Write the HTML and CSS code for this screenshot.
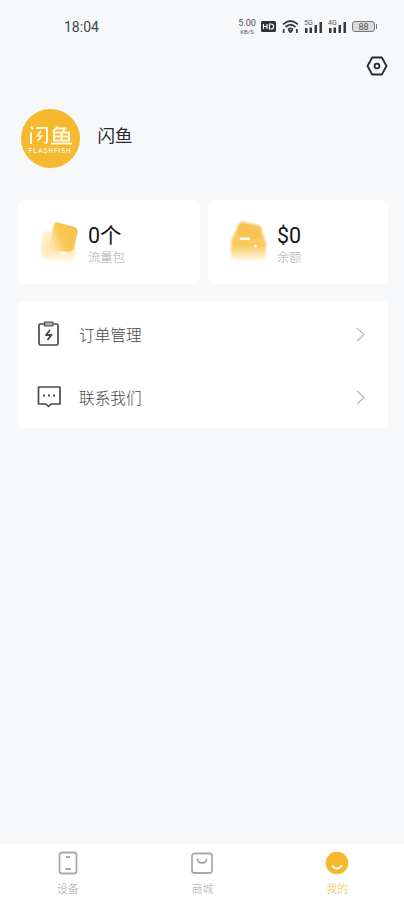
FILE: index.html
```html
<!DOCTYPE html>
<html lang="zh-CN">
<head>
<meta charset="utf-8">
<meta name="viewport" content="width=device-width, initial-scale=1">
<title>我的</title>
<link rel="stylesheet" href="styles.css">
</head>
<body>
<div class="app">
  <header class="status">
    <span class="time">18:04</span>
    <div class="indicators">
      <div class="speed"><span>5.00</span><small>KB/S</small></div>
      <svg class="hd" width="15" height="11" viewBox="0 0 15 11"><rect width="15" height="11" rx="1.500" fill="#303236"/><path d="M2.500 3v5M6 3v5M2.500 5.500H6M8.500 3H10c3.500 0 3.500 5 0 5H8.500z" fill="none" stroke="#f6f8fa" stroke-width="1.200"/></svg>
      <svg class="wifi" width="17" height="13" viewBox="0 0 17 13" fill="none" stroke="#38393d" stroke-width="1.700"><path d="M1 4.300Q8.500-2.300 16 4.300M3.500 7Q8.500 2.500 13.500 7M6 9.500Q8.500 7.400 11 9.500"/><path d="M7.300 10.800h2.400L8.500 12.300zM1.700 9v4M14.800 9v4"/></svg>
      <div class="signal"><span>5G</span><svg width="19" height="13" viewBox="0 0 19 13" fill="#38393d"><path d="M1 8h2.500v5H1zM5.500 7.500H8V13H5.500zM10.500 5H13v8h-2.500zM15.500 2H18v11h-2.500z"/></svg></div>
      <div class="signal"><span>4G</span><svg width="19" height="13" viewBox="0 0 19 13" fill="#38393d"><path d="M1 8h2.500v5H1zM5.500 7.500H8V13H5.500zM10.500 5H13v8h-2.500zM15.500 2H18v11h-2.500z"/></svg></div>
      <div class="battery">88</div>
    </div>
  </header>

  <div class="toolbar">
    <svg width="22" height="20" viewBox="0 0 22 20" fill="none" stroke="#28292d" stroke-width="1.800" stroke-linejoin="round"><path d="M6.200 1.500h9.600L20.500 10l-4.700 8.500H6.200L1.500 10z"/><circle cx="11" cy="10" r="2.400"/></svg>
  </div>

  <section class="profile">
    <div class="avatar">
      <div class="logo">
        <svg width="20" height="19" viewBox="0 0 20 19" fill="none" stroke="#fff8df" stroke-width="2.100"><path d="M2 .5l2 3M2 6v12M7 2h11v13.500q0 1.500-3 1.500"/><path d="M12 5l-4 5h4.500l-4 5" stroke-width="1.700"/></svg>
        <svg width="21" height="19" viewBox="0 0 21 19" fill="none" stroke="#fff8df" stroke-width="2.100"><path d="M7 .5L2 5.500M6 2.500h8l-2 3.500M3 6.500h15v8H3zM3 10.500h15M10.500 6v8M0 17.500h21"/></svg>
      </div>
      <span class="brand">FLASHFISH</span>
    </div>
    <h1>闪鱼</h1>
  </section>

  <main>
    <section class="stats">
      <div class="card">
        <svg width="40" height="46" viewBox="0 0 40 46">
          <defs>
            <linearGradient id="back" x1="0" y1="0" x2="0" y2="1"><stop stop-color="#fff1d0"/><stop offset=".65" stop-color="#ffe8b2"/><stop offset="1" stop-color="#fff8e8"/></linearGradient>
            <linearGradient id="front" x1="1" y1="0" x2="0" y2=".45"><stop stop-color="#f5c04c"/><stop offset=".65" stop-color="#f9c753"/><stop offset="1" stop-color="#ffe09a"/></linearGradient>
            <filter id="soft" x="-20%" y="-20%" width="140%" height="140%"><feGaussianBlur stdDeviation=".9"/></filter>
            <filter id="smooth" x="-20%" y="-50%" width="140%" height="200%"><feGaussianBlur stdDeviation=".5"/></filter>
          </defs>
          <rect x="1.500" y="11" width="34" height="30" rx="7" fill="url(#back)" filter="url(#soft)"/>
          <path d="M18 2.500L33 6.500Q38.500 8 37.500 13L34 27Q33 32 28 31.500L14 30.500Q9 30 10 24L13.500 6Q14.500 1.500 18 2.500z" fill="url(#front)" filter="url(#smooth)"/>
          <path d="M20 33.500h7" stroke="#fffdf5" stroke-width="2"/>
        </svg>
        <div class="amount"><strong>0个</strong><span>流量包</span></div>
      </div>
      <div class="card">
        <svg width="40" height="46" viewBox="0 0 40 46">
          <defs>
            <linearGradient id="bag" x1="0" y1="0" x2="0" y2="1"><stop stop-color="#fbcd6a"/><stop offset=".5" stop-color="#fbca5c"/><stop offset=".75" stop-color="#fee3a4"/><stop offset="1" stop-color="#fffaf0"/></linearGradient>
          </defs>
          <path d="M7 10Q1 18 1 25v10q0 6 6 6h23q6 0 6-6V25q0-7-5-13z" fill="url(#bag)" filter="url(#soft)"/>
          <path d="M8 4.500q1.500-3 5-2.500l14 3q5 1 5 6l-1 5q-2 4-8 3L8 16q-3-1-2-4z" fill="#f7c352" filter="url(#soft)"/>
          <path d="M11 18.800h8M25 26h.5" fill="none" stroke="#fffaf0" stroke-width="2.600" stroke-linecap="round"/>
        </svg>
        <div class="amount"><strong>$0</strong><span>余额</span></div>
      </div>
    </section>

    <nav class="menu">
      <a class="row">
        <svg class="icon" width="24" height="26" viewBox="0 0 24 26" fill="none" stroke="#4b4b4d" stroke-width="1.700" stroke-linejoin="round"><path d="M7 3H3.500Q2 3 2 4.500v18Q2 24 3.500 24h16q1.500 0 1.500-1.500v-18Q21 3 19.500 3h-3"/><path d="M7.500 1h8.500v4H7.500z" fill="#aaa" stroke-width="1.200"/><path d="M13 9l-4 5h5.500l-4 5" stroke-width="1.900"/></svg>
        <span>订单管理</span>
        <svg class="chevron" width="9" height="15" viewBox="0 0 9 15" fill="none" stroke="#bebebe" stroke-width="1.400"><path d="M1 1l7 6.500L1 14"/></svg>
      </a>
      <a class="row">
        <svg class="icon" width="24" height="26" viewBox="0 0 24 26" fill="none" stroke="#4b4b4d" stroke-width="1.700" stroke-linejoin="round"><path d="M1.500 3h21.500v17H14L11.500 22.500 9 20H1.500z"/><path d="M6 11.500h2M11 11.500h2M16 11.500h2" stroke-width="2"/></svg>
        <span>联系我们</span>
        <svg class="chevron" width="9" height="15" viewBox="0 0 9 15" fill="none" stroke="#bebebe" stroke-width="1.400"><path d="M1 1l7 6.500L1 14"/></svg>
      </a>
    </nav>
  </main>

  <footer class="tabs">
    <a class="tab">
      <svg width="24" height="24" viewBox="0 0 24 24" fill="none" stroke="#aaaaac" stroke-width="1.800"><rect x="3.500" y="1.500" width="17" height="21" rx="2.500"/><path d="M10 6h4M9.500 18h5.500"/></svg>
      <span>设备</span>
    </a>
    <a class="tab">
      <svg width="24" height="24" viewBox="0 0 24 24" fill="none" stroke="#aaaaac" stroke-width="1.800"><rect x="2" y="2.500" width="20" height="19.500" rx="2.500"/><path d="M7.500 7.500q0 4.500 4.500 4.500t4.500-4.500"/></svg>
      <span>商城</span>
    </a>
    <a class="tab active">
      <svg width="24" height="24" viewBox="0 0 24 24"><circle cx="12" cy="12" r="11.300" fill="#f5b82e"/><path d="M7.500 15q4.500 5 9 0" fill="none" stroke="#fffaf0" stroke-width="2" stroke-linecap="round"/></svg>
      <span>我的</span>
    </a>
  </footer>
</div>
</body>
</html>
```
FILE: styles.css
```css
* { box-sizing: border-box; }
body {
  margin: 0;
  background: #f6f8fa;
  color: #292a2d;
  font-family: Roboto, "Noto Sans CJK SC", sans-serif;
}
svg { display: block; flex: none; }
.app { height: 900px; display: flex; flex-direction: column; overflow: hidden; }
.status {
  height: 53px;
  padding: 0 27px 0 64px;
  display: flex;
  align-items: center;
  justify-content: space-between;
}
.time { font-size: 14px; line-height: 16px; color: #444548; }
.indicators { display: flex; align-items: center; }
.speed { width: 20px; margin-right: 4px; display: flex; flex-direction: column; align-items: center; color: #4d4e51; }
.speed span { font-size: 9px; line-height: 10px; }
.speed small { font-size: 6px; line-height: 7px; }
.wifi { margin: 0 5px 0 6px; }
.signal { position: relative; width: 19px; margin-right: 5px; }
.signal span { position: absolute; left: 0; top: -1px; font-size: 7px; line-height: 8px; color: #55565a; }
.battery {
  position: relative;
  width: 23px;
  height: 11px;
  margin-right: 2px;
  border: 1px solid #77787a;
  border-radius: 3px;
  background: #d9dbdc;
  color: #55565a;
  font-size: 9px;
  line-height: 10px;
  text-align: center;
}
.battery::after { content: ""; position: absolute; right: -3px; top: 2px; width: 1px; height: 5px; background: #77787a; }
.toolbar { height: 27px; padding: 3px 16px 0 0; display: flex; justify-content: flex-end; }
.profile { height: 120px; padding: 29px 0 0 20.500px; display: flex; align-items: flex-start; }
.avatar {
  width: 59px;
  height: 59px;
  border-radius: 50%;
  background: #f5b82e;
  display: flex;
  flex-direction: column;
  align-items: center;
  padding-top: 17px;
}
.logo { display: flex; gap: 2px; }
.brand { margin-top: 2px; font: bold 6.500px/7px "Liberation Sans", sans-serif; letter-spacing: .7px; color: #fff1c8; }
h1 { margin: 14px 0 0 18px; font-size: 17.500px; line-height: 26px; font-weight: 400; }
main { flex: 1; padding: 0 16px 0 18px; }
.stats { display: grid; grid-template-columns: 182px 180px; gap: 8px; }
.card { height: 84px; padding: 20px 0 0 22px; display: flex; align-items: flex-start; background: #fff; border-radius: 6px; }
.amount { margin: 3px 0 0 8px; display: flex; flex-direction: column; }
.card + .card .amount { margin-left: 7px; }
.amount strong { font-size: 21.500px; line-height: 25px; font-weight: 400; color: #151618; }
.amount span { padding-top: 1px; font-size: 12.300px; line-height: 18px; color: #acacae; font-weight: 300; }
.menu { height: 127px; margin-top: 17px; background: #fff; border-radius: 6px; }
.row { height: 63px; padding: 3px 23px 0 19px; display: flex; align-items: center; }
.row .icon { margin-right: 18px; }
.row span { flex: 1; padding-top: 3px; font-size: 15.700px; line-height: 24px; color: #48484a; font-weight: 300; }
.tabs { height: 56px; display: grid; grid-template-columns: repeat(3, 1fr); background: #fff; }
.tab { padding: 7px 0 0 1px; display: flex; flex-direction: column; align-items: center; }
.tab span { margin-top: 6px; font-size: 11px; line-height: 17px; color: #a9a9ac; font-weight: 300; }
.tab.active span { color: #f2bd4a; }
```
